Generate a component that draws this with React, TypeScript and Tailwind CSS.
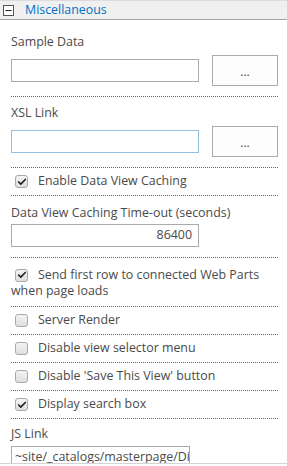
import { Check, Minus } from 'lucide-react'

const font = { fontFamily: '"Segoe UI", "Open Sans", "Noto Sans", sans-serif' }

function Box({ checked }: { checked: boolean }) {
  return (
    <span className="flex h-[13px] w-[13px] shrink-0 items-center justify-center rounded-[3px] border border-[#a8a8a8] bg-gradient-to-b from-[#f4f4f4] to-[#dedede]">
      {checked && <Check className="h-[10px] w-[10px] text-[#222]" strokeWidth={4} />}
    </span>
  )
}

function Dots() {
  return <div className="mr-[9px] border-b border-dotted border-[#3a66d4]" />
}

function CheckRow({ label, checked }: { label: string; checked: boolean }) {
  return (
    <>
      <div className="flex h-[27px] items-center gap-[10px] pl-[4px]">
        <Box checked={checked} />
        <span>{label}</span>
      </div>
      <Dots />
    </>
  )
}

function PickRow({ focus }: { focus?: boolean }) {
  return (
    <div className="mt-[4px] flex items-center justify-between pr-[9px]">
      <div
        className={
          'h-[23px] w-[188px] border bg-white ' +
          (focus ? 'border-[#92c0e0]' : 'border-[#ababab]')
        }
      />
      <button className="flex h-[31px] w-[66px] items-end justify-center border border-[#ababab] bg-[#fdfdfd] pb-[7px] text-[12px] leading-none text-[#444]">
        ...
      </button>
    </div>
  )
}

export default function App() {
  return (
    <div className="h-[464px] w-[287px] overflow-hidden border-b border-[#d4d4d4] bg-white text-[12.4px] text-[#4a4a4a]" style={font}>
      {/* Header */}
      <div className="flex h-[20px] items-center gap-[11px] border-t border-b border-t-[#dcdcdc] border-b-[#a3a3a3] bg-[#f0f0f0] pl-[3px]">
        <span className="flex h-[11px] w-[11px] items-center justify-center border border-[#555] bg-white">
          <Minus className="h-[9px] w-[9px] text-[#222]" strokeWidth={3} />
        </span>
        <span className="text-[#0072c6]">Miscellaneous</span>
      </div>

      <div className="pl-[11px]">
        <div className="mt-[13px] leading-[18px]">Sample Data</div>
        <PickRow />
        <div className="mt-[10px]">
          <Dots />
        </div>

        <div className="mt-[7px] leading-[18px]">XSL Link</div>
        <PickRow focus />
        <div className="mt-[10px]">
          <Dots />
        </div>

        <CheckRow label="Enable Data View Caching" checked />

        <div className="mt-[8px] leading-[18px]">Data View Caching Time-out (seconds)</div>
        <div className="mt-[2px] flex h-[23px] w-[188px] items-center justify-end border border-[#ababab] bg-white pr-[6px]">
          86400
        </div>
        <div className="mt-[10px]">
          <Dots />
        </div>

        <div className="pt-[9px] leading-[16px]">
          <div className="flex items-center gap-[10px] pl-[4px]">
            <Box checked />
            <span>Send first row to connected Web Parts</span>
          </div>
          <div>when page loads</div>
        </div>
        <div className="mt-[7px]">
          <Dots />
        </div>

        <CheckRow label="Server Render" checked={false} />
        <CheckRow label="Disable view selector menu" checked={false} />
        <CheckRow label="Disable 'Save This View' button" checked={false} />
        <CheckRow label="Display search box" checked />

        <div className="mt-[6px] leading-[18px]">JS Link</div>
        <div className="mt-[3px] h-[20px] w-[179px] overflow-hidden whitespace-nowrap border border-b-0 border-[#ababab] bg-white pl-[3px] pt-[1px] leading-[18px]">
          ~site/_catalogs/masterpage/Di
        </div>
      </div>
    </div>
  )
}
